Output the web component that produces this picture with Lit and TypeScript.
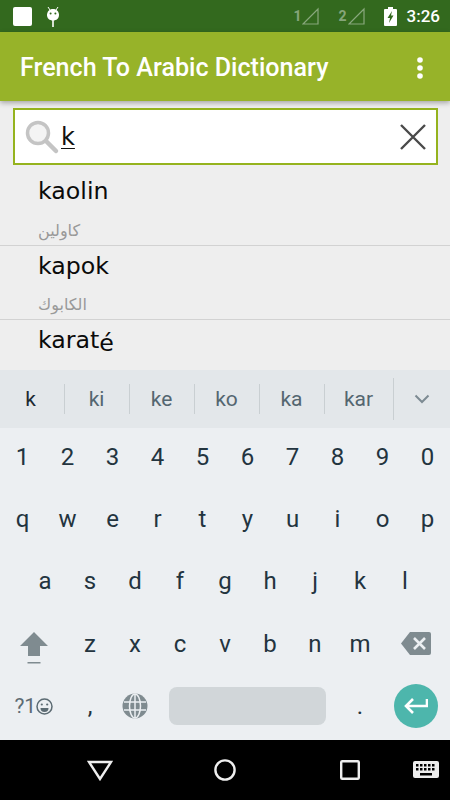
import { LitElement, html, css, svg } from "lit";
import { customElement } from "lit/decorators.js";

const row = (keys: string[], cls = "") => html`<div class="row ${cls}">${keys.map((k) => html`<span class="key">${k}</span>`)}</div>`;

@customElement("app-root")
export class AppRoot extends LitElement {
  static styles = css`
    :host { display: flex; flex-direction: column; width: 450px; height: 800px; overflow: hidden; background: #eeeeee; font-family: Roboto, sans-serif; }
    .status { height: 32px; flex: none; background: #33691e; display: flex; align-items: center; padding: 0 10px 0 13px; box-sizing: border-box; color: #fff; }
    .status .sq { width: 19px; height: 19px; background: #fff; border-radius: 2px; margin-right: 14px; }
    .status .grow { flex: 1; }
    .sim { display: flex; align-items: center; font-size: 14px; font-weight: 700; color: rgba(255,255,255,.42); margin-right: 19px; gap: 1px; }
    .time { font-size: 17px; font-weight: 500; margin-left: 10px; }
    .bar { height: 69px; flex: none; background: #97b329; display: flex; align-items: center; padding: 2px 27px 0 20px; box-sizing: border-box; color: #fff; box-shadow: 0 2px 5px rgba(0,0,0,.3); position: relative; z-index: 1; }
    .title { flex: 1; font-size: 25.100px; font-weight: 500; white-space: nowrap; }
    .content { flex: 1; min-height: 0; padding-top: 7px; display: flex; flex-direction: column; }
    .search { height: 57px; margin: 0 12px 0 13px; flex: none; box-sizing: border-box; border: 2px solid #95b31e; background: #fff; display: flex; align-items: center; padding: 0 9px; }
    .search .q { flex: 1; font: 400 24px "DejaVu Sans", sans-serif; color: #111; margin-left: 1px; }
    .search .q u { text-underline-offset: 3px; text-decoration-thickness: 1px; }
    .item { height: 74px; box-sizing: border-box; border-bottom: 1px solid #d2d2d2; padding-left: 38px; flex: none; }
    .word { font: 400 23.700px/28px "DejaVu Sans", sans-serif; color: #0a0a0a; height: 48px; padding-top: 6px; box-sizing: border-box; }
    .ar { font: 400 16px/20px "DejaVu Sans", "Noto Sans", sans-serif; color: #999; margin-top: 1px; }
    .item.first { height: 81px; }
    .item.first .word { height: 55px; padding-top: 12px; }
    .item.last { border: 0; }
    .low { display: inline-block; transform: translateY(3px); }
    .kb { height: 370px; flex: none; display: flex; flex-direction: column; background: #eceff2; }
    .sugg { height: 58px; flex: none; background: #e3e7ea; display: flex; align-items: center; font-size: 21px; color: #546670; font-family: Roboto, sans-serif; }
    .sugg span { width: 65px; text-align: center; height: 30px; line-height: 30px; border-right: 1px solid #c9cfd2; box-sizing: border-box; padding-right: 1px; }
    .sugg span.first { color: #1c2a32; padding-right: 3px; }
    .sugg span.kar { width: 69px; height: 42px; line-height: 42px; }
    .sugg .more { flex: 1; display: flex; justify-content: center; }
    .row { height: 62.4px; box-sizing: border-box; padding-bottom: 5px; display: flex; justify-content: center; align-items: center; }
    .key { width: 45px; text-align: center; font: 400 24px Roboto, sans-serif; color: #23343f; }
    .wide { width: 67.5px; display: flex; justify-content: center; align-items: center; flex: none; }
    .shift { margin-top: 8px; }
    .sym { font: 400 21px Roboto, sans-serif; color: #5c6b73; display: flex; align-items: center; }
    .space { width: 157px; height: 38px; background: #d1d6d9; border-radius: 8px; margin: 0 11.5px; flex: none; }
    .enter { width: 44px; height: 44px; border-radius: 50%; background: #4db6ac; display: flex; align-items: center; justify-content: center; }
    .icon { width: 45px; flex: none; display: flex; justify-content: center; }
    .nav { height: 60px; flex: none; background: #000; display: grid; padding-left: 37.5px; grid-template-columns: 125px 125px 125px 26px; align-items: center; justify-items: center; }
  `;

  render() {
    return html`
      <div class="status">
        <div class="sq"></div>
        <svg width="14" height="21" viewBox="0 0 14 21"><path d="M2 1l2 3M12 1l-2 3" stroke="#fff" stroke-width="1"/><path d="M7 3c3.6 0 6 2.6 6 6s-2.4 5.5-6 5.5S1 12.400 1 9s2.400-6 6-6z" fill="#fff"/><circle cx="4.600" cy="7.500" r="1" fill="#33691e"/><circle cx="9.400" cy="7.500" r="1" fill="#33691e"/><rect x="6.200" y="14" width="1.600" height="7" fill="#fff"/></svg>
        <div class="grow"></div>
        <div class="sim">1<svg width="17" height="18" viewBox="0 0 17 18"><path d="M1 17L16 2v15z" fill="none" stroke="currentColor" stroke-width="1.200"/></svg></div>
        <div class="sim">2<svg width="17" height="18" viewBox="0 0 17 18"><path d="M1 17L16 2v15z" fill="none" stroke="currentColor" stroke-width="1.200"/></svg></div>
        <svg width="13" height="19" viewBox="0 0 13 19"><path d="M4 0h5v2h3a1 1 0 0 1 1 1v15a1 1 0 0 1-1 1H1a1 1 0 0 1-1-1V3a1 1 0 0 1 1-1h3z" fill="#fff"/><path d="M8 4L3.500 11H6l-1 5 4.500-7.500H7z" fill="#33691e"/></svg>
        <span class="time">3:26</span>
      </div>
      <div class="bar">
        <div class="title">French To Arabic Dictionary</div>
        <svg width="6" height="22" viewBox="0 0 6 22"><circle cx="3" cy="3" r="2.800" fill="#fff"/><circle cx="3" cy="11" r="2.800" fill="#fff"/><circle cx="3" cy="19" r="2.800" fill="#fff"/></svg>
      </div>
      <div class="content">
        <div class="search">
          <svg width="36" height="36" viewBox="0 0 36 36"><circle cx="14" cy="14" r="10.500" fill="#f4f4f4" stroke="#c4c4c4" stroke-width="3.500"/><path d="M22 22l10 10" stroke="#c4c4c4" stroke-width="4.500" stroke-linecap="round"/></svg>
          <div class="q"><u>k</u></div>
          <svg width="28" height="28" viewBox="0 0 28 28"><path d="M2 2l24 24M26 2L2 26" stroke="#4a4a4a" stroke-width="2.400"/></svg>
        </div>
        <div class="item first"><div class="word">kaolin</div><div class="ar">كاولين</div></div>
        <div class="item"><div class="word">kapok</div><div class="ar">الكابوك</div></div>
        <div class="item last"><div class="word">karat<span class="low">é</span></div></div>
      </div>
      <div class="kb">
        <div class="sugg">
          <span class="first">k</span><span>ki</span><span>ke</span><span>ko</span><span>ka</span><span class="kar">kar</span>
          <div class="more"><svg width="16" height="10" viewBox="0 0 16 10"><path d="M1.500 1.500L8 8l6.500-6.500" fill="none" stroke="#7d8b93" stroke-width="2"/></svg></div>
        </div>
        ${row(["1","2","3","4","5","6","7","8","9","0"])}
        ${row(["q","w","e","r","t","y","u","i","o","p"])}
        ${row(["a","s","d","f","g","h","j","k","l"])}
        <div class="row">
          <div class="wide shift"><svg width="30" height="34" viewBox="0 0 30 34"><path d="M15 1L29 15h-8v10H9V15H1z" fill="#7f8b90"/><rect x="8.500" y="31" width="13" height="1.500" fill="#7f8b90"/></svg></div>
          ${["z","x","c","v","b","n","m"].map((k) => html`<span class="key">${k}</span>`)}
          <div class="wide"><svg width="30" height="23" viewBox="0 0 30 23"><path d="M9 0h19a2 2 0 0 1 2 2v19a2 2 0 0 1-2 2H9L0 11.500z" fill="#7f8b90"/><path d="M13 6l11 11M24 6L13 17" stroke="#eceff2" stroke-width="2.600"/></svg></div>
        </div>
        <div class="row">
          <div class="wide sym">?1<svg width="17" height="17" viewBox="0 0 17 17"><circle cx="8.500" cy="8.500" r="7.500" fill="none" stroke="#5c6b73" stroke-width="1.500"/><circle cx="5.800" cy="6.500" r="1.100" fill="#5c6b73"/><circle cx="11.200" cy="6.500" r="1.100" fill="#5c6b73"/><path d="M4.500 10h8a4 4 0 0 1-8 0z" fill="#5c6b73"/></svg></div>
          <span class="key">,</span>
          <div class="icon"><svg width="26" height="26" viewBox="0 0 26 26"><circle cx="13" cy="13" r="12.500" fill="#7f8b90"/><g fill="none" stroke="#eceff2" stroke-width="1.500"><ellipse cx="13" cy="13" rx="5.500" ry="12"/><path d="M13 1v24M2 9h22M2 17h22"/></g></svg></div>
          <div class="space"></div>
          <span class="key">.</span>
          <div class="wide"><div class="enter"><svg width="24" height="18" viewBox="0 0 24 18"><path d="M23 2v7H3M9 2L2 9l7 7" fill="none" stroke="#fff" stroke-width="2.600"/></svg></div></div>
        </div>
      </div>
      <div class="nav">
        <svg width="26" height="21" viewBox="0 0 26 21"><path d="M2 2h22L13 19z" fill="none" stroke="#eee" stroke-width="2.400"/></svg>
        <svg width="22" height="22" viewBox="0 0 22 22"><circle cx="11" cy="11" r="9.600" fill="none" stroke="#eee" stroke-width="2.400"/></svg>
        <svg width="20" height="20" viewBox="0 0 20 20"><rect x="1.200" y="1.200" width="17.600" height="17.600" rx="1" fill="none" stroke="#eee" stroke-width="2.400"/></svg>
        <svg width="26" height="19" viewBox="0 0 26 19"><path d="M2 0h22a2 2 0 0 1 2 2v13a2 2 0 0 1-2 2H2a2 2 0 0 1-2-2V2a2 2 0 0 1 2-2z" fill="#eee"/><g fill="#000">${[3,7,11,15,19].map((x) => svg`<rect x="${x}" y="3" width="2.500" height="2.500"/><rect x="${x}" y="7" width="2.500" height="2.500"/>`)}<rect x="7" y="12" width="12" height="2.500"/></g></svg>
      </div>
    `;
  }
}
